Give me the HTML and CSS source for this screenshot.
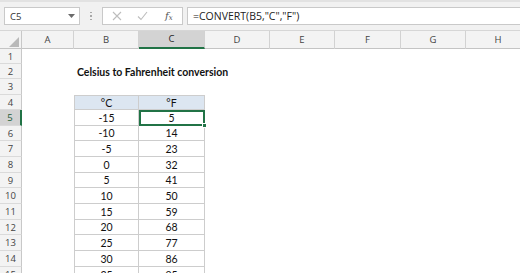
FILE: index.html
```html
<!DOCTYPE html>
<html>
<head>
<meta charset="utf-8">
<link rel="stylesheet" href="styles.css">
</head>
<body>
<div class="app">
  <div class="fbar">
    <div class="namebox"><span>C5</span><svg class="dd" width="7" height="4" viewBox="0 0 7 4"><path d="M0 0h7L3.5 4z" fill="#6b6b6b"/></svg></div>
    <div class="grip"><i></i><i></i><i></i></div>
    <div class="fxbox">
      <svg class="ic" width="10" height="10" viewBox="0 0 10 10"><path d="M1 1l8 8M9 1l-8 8" stroke="#bdbdbd" stroke-width="1.1" fill="none"/></svg>
      <svg class="ic" width="11" height="10" viewBox="0 0 11 10"><path d="M1 5.5l3 3L10 1" stroke="#bdbdbd" stroke-width="1.1" fill="none"/></svg>
      <span class="fx">f<sub>x</sub></span>
    </div>
    <div class="formula">=CONVERT(B5,"C","F")</div>
  </div>
  <div class="sheet">
    <div class="row hdr">
      <div class="corner"><svg width="10" height="10" viewBox="0 0 10 10"><path d="M10 0V10H0z" fill="#b9b9b9"/></svg></div>
      <div class="ch">A</div><div class="ch">B</div><div class="ch sel">C</div><div class="ch">D</div><div class="ch">E</div><div class="ch">F</div><div class="ch">G</div><div class="ch">H</div>
    </div>
    <div class="row h15"><div class="rh">1</div></div>
    <div class="row h15"><div class="rh">2</div><div class="title">Celsius to Fahrenheit conversion</div></div>
    <div class="row h16"><div class="rh">3</div></div>
    <div class="row h15"><div class="rh">4</div><div class="c b th">°C</div><div class="c cc th">°F</div></div>
    <div class="row h16"><div class="rh rsel">5</div><div class="c b">-15</div><div class="c cc active">5<span class="handle"></span></div></div>
    <div class="row h15"><div class="rh">6</div><div class="c b">-10</div><div class="c cc">14</div></div>
    <div class="row h16"><div class="rh">7</div><div class="c b">-5</div><div class="c cc">23</div></div>
    <div class="row h16"><div class="rh">8</div><div class="c b">0</div><div class="c cc">32</div></div>
    <div class="row h15"><div class="rh">9</div><div class="c b">5</div><div class="c cc">41</div></div>
    <div class="row h16"><div class="rh">10</div><div class="c b">10</div><div class="c cc">50</div></div>
    <div class="row h16"><div class="rh">11</div><div class="c b">15</div><div class="c cc">59</div></div>
    <div class="row h15"><div class="rh">12</div><div class="c b">20</div><div class="c cc">68</div></div>
    <div class="row h16"><div class="rh">13</div><div class="c b">25</div><div class="c cc">77</div></div>
    <div class="row h16"><div class="rh">14</div><div class="c b">30</div><div class="c cc">86</div></div>
    <div class="row h16"><div class="rh">15</div><div class="c b">35</div><div class="c cc">95</div></div>
  </div>
</div>
</body>
</html>
```
FILE: styles.css
```css
* { box-sizing: border-box; }
html, body { margin: 0; padding: 0; }
body { width: 520px; height: 273px; overflow: hidden; background: #fff; font-family: "Open Sans", "Noto Sans", sans-serif; }
.app { width: 520px; }

.fbar {
  height: 31px;
  background: #f1f1f1;
  border-top: 2px solid #e2e2e2;
  border-bottom: 1px solid #d6d6d6;
  display: flex;
  align-items: flex-start;
  padding-top: 5px;
  padding-left: 4px;
}
.namebox {
  width: 76px; height: 18px;
  background: #fff; border: 1px solid #c9c9c9;
  display: flex; align-items: center; justify-content: space-between;
  padding: 0 4px 0 5px;
  font-size: 9.5px; color: #333;
}
.grip { width: 22px; height: 18px; display: flex; flex-direction: column; align-items: center; justify-content: center; gap: 2px; }
.grip i { width: 1.5px; height: 1.5px; background: #a8a8a8; display: block; }
.fxbox {
  width: 81px; height: 18px;
  background: #fff; border: 1px solid #c9c9c9;
  display: flex; align-items: center;
  padding-left: 9px; gap: 15px;
}
.fx { font-family: "DejaVu Serif", "Liberation Serif", serif; font-style: italic; font-size: 10px; color: #555; margin-left: 2px; }
.fx sub { font-size: 7px; vertical-align: -1px; }
.formula {
  flex: 1; height: 18px; margin-left: 4px;
  background: #fff; border: 1px solid #c9c9c9; border-right: none;
  padding-left: 5px;
  font-size: 10.5px; line-height: 16px; color: #222;
}

.sheet { }
.row {
  display: grid;
  grid-template-columns: 22px 52px 65px 66px 65px 65px 66px 65px 65px;
}
.hdr { height: 18px; background: #f3f3f3; border-bottom: 1px solid #c4c4c4; }
.corner { display: flex; align-items: flex-end; justify-content: flex-end; padding: 0 2px 2px 0; border-right: 1px solid #c8c8c8; }
.ch {
  font-size: 9.5px; color: #444;
  text-align: center; line-height: 17px;
  border-right: 1px solid #d2d2d2;
}
.ch.sel { background: #d3d3d3; color: #262626; border-bottom: 2px solid #217346; line-height: 16px; }

.h15 { height: 15px; }
.h16 { height: 16px; }
.rh {
  grid-column: 1;
  background: #f3f3f3;
  border-right: 1px solid #c8c8c8;
  border-bottom: 1px solid #dadada;
  font-size: 9.5px; color: #444;
  display: flex; align-items: center; justify-content: center;
}
.rh.rsel { background: #d3d3d3; color: #1e5e3a; border-right: 2px solid #217346; }

.title {
  grid-column: 3 / 10;
  font-family: "Lato", sans-serif; font-weight: 700; font-size: 10.5px; color: #111;
  padding-left: 3px; white-space: nowrap;
  display: flex; align-items: center;
}
.c {
  font-family: "Lato", sans-serif; font-size: 10.5px; color: #111;
  display: flex; align-items: center; justify-content: center;
  border-bottom: 1px solid #cdcdcd;
  border-right: 1px solid #cdcdcd;
}
.c.b { grid-column: 3; border-left: 1px solid #cdcdcd; }
.c.cc { grid-column: 4; }
.th { background: #dce6f1; border-top: 1px solid #cdcdcd; }
.active { position: relative; outline: 2px solid #217346; outline-offset: -2px; }
.handle { position: absolute; right: -3px; bottom: -3px; width: 5px; height: 5px; background: #217346; border: 1px solid #fff; }
```
